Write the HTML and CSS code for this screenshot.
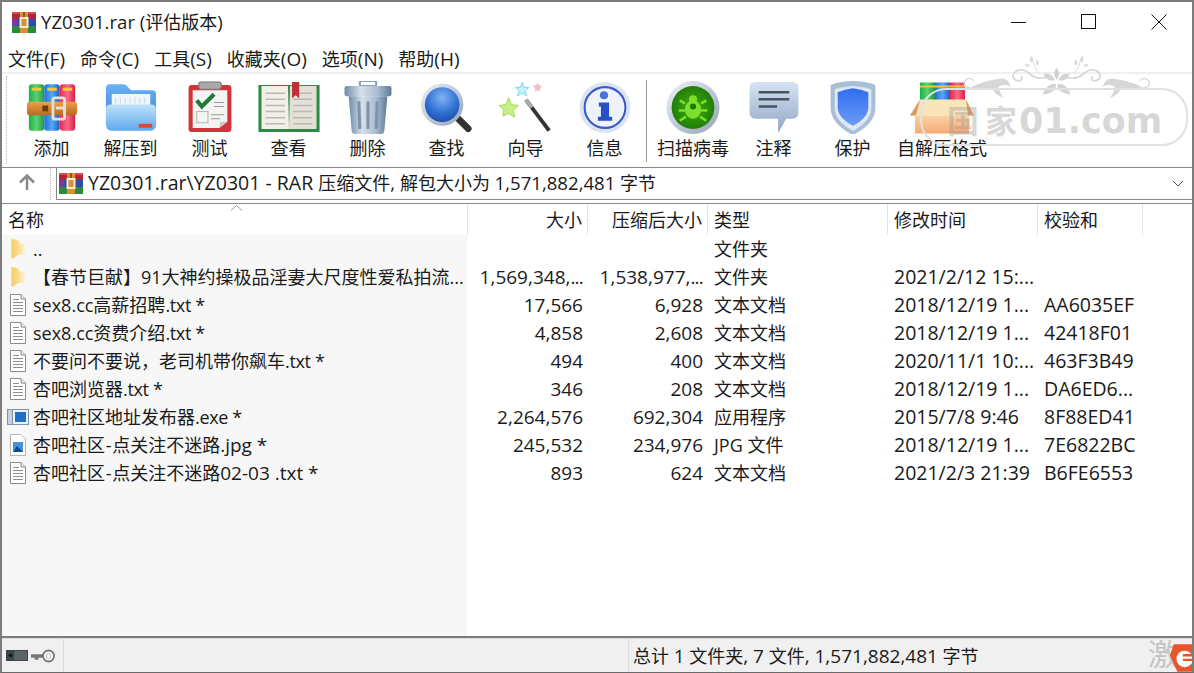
FILE: index.html
```html
<!DOCTYPE html>
<html lang="zh-CN">
<head>
<meta charset="utf-8">
<title>YZ0301.rar</title>
<link rel="stylesheet" href="styles.css">
</head>
<body>
<svg class="defs" width="0" height="0" aria-hidden="true">
  <defs>
    <linearGradient id="gGreen" x1="0" x2="1"><stop offset="0" stop-color="#1fae4e"/><stop offset=".5" stop-color="#58d36f"/><stop offset="1" stop-color="#1c9a45"/></linearGradient>
    <linearGradient id="gBlue" x1="0" x2="1"><stop offset="0" stop-color="#1f6fd8"/><stop offset=".5" stop-color="#58a8f5"/><stop offset="1" stop-color="#1a5fc4"/></linearGradient>
    <linearGradient id="gRed" x1="0" x2="1"><stop offset="0" stop-color="#e8264f"/><stop offset=".5" stop-color="#fb6a8a"/><stop offset="1" stop-color="#d91f48"/></linearGradient>
    <linearGradient id="gBelt" x1="0" x2="0" y1="0" y2="1"><stop offset="0" stop-color="#eaa24e"/><stop offset="1" stop-color="#b96a1e"/></linearGradient>
    <linearGradient id="gFolder" x1="0" x2="0" y1="0" y2="1"><stop offset="0" stop-color="#bfe2fb"/><stop offset="1" stop-color="#5fa8ec"/></linearGradient>
    <linearGradient id="gFolderBack" x1="0" x2="0" y1="0" y2="1"><stop offset="0" stop-color="#69b2f2"/><stop offset="1" stop-color="#3b7fd6"/></linearGradient>
    <linearGradient id="gCan" x1="0" x2="1"><stop offset="0" stop-color="#6f8ba8"/><stop offset=".35" stop-color="#d5e0ea"/><stop offset=".7" stop-color="#a9bdd0"/><stop offset="1" stop-color="#5f7b98"/></linearGradient>
    <radialGradient id="gLens" cx=".5" cy=".3" r=".75"><stop offset="0" stop-color="#7fb4f5"/><stop offset=".6" stop-color="#2f6fd2"/><stop offset="1" stop-color="#1c4aa6"/></radialGradient>
    <linearGradient id="gRing" x1="0" x2="1" y1="0" y2="1"><stop offset="0" stop-color="#eef2f7"/><stop offset="1" stop-color="#93a3b8"/></linearGradient>
    <radialGradient id="gBug" cx=".5" cy=".5" r=".55"><stop offset="0" stop-color="#3fae10"/><stop offset="1" stop-color="#1d7a06"/></radialGradient>
    <linearGradient id="gBubble" x1="0" x2="0" y1="0" y2="1"><stop offset="0" stop-color="#d6e3f2"/><stop offset="1" stop-color="#8fa6c4"/></linearGradient>
    <linearGradient id="gShield" x1="0" x2="0" y1="0" y2="1"><stop offset="0" stop-color="#2f6df0"/><stop offset="1" stop-color="#6d9cf7"/></linearGradient>
    <linearGradient id="gBox" x1="0" x2="0" y1="0" y2="1"><stop offset="0" stop-color="#fbd3a4"/><stop offset="1" stop-color="#f4a974"/></linearGradient>
    <linearGradient id="gSmallFolder" x1="0" x2="1"><stop offset="0" stop-color="#f5cb62"/><stop offset=".55" stop-color="#f9dd94"/><stop offset="1" stop-color="#fdf1cc"/></linearGradient>

    <symbol id="iRar" viewBox="0 0 24 21">
      <rect width="24" height="7" fill="#b0243c"/>
      <rect y="0" width="24" height="2" fill="#d84a5a"/>
      <rect y="7" width="24" height="7" fill="#2f4ab0"/>
      <rect y="14" width="24" height="7" fill="#2b8a3e"/>
      <rect x="0" y="7" width="5" height="7" fill="#7a3aa0"/>
      <rect x="8" y="0" width="8" height="21" fill="#d9912f"/>
      <rect x="8.500" y="6" width="7" height="9" fill="none" stroke="#f4ecd0" stroke-width="2"/>
      <rect x="11" y="0" width="2" height="5" fill="#8a5518"/>
    </symbol>
    <symbol id="iFolder" viewBox="0 0 16 20">
      <path d="M2 1 Q6 1 9 3 V5 H14 V15 H9 Q6 17 3 19 Q2 19 2 18 Z" fill="url(#gSmallFolder)"/>
    </symbol>
    <symbol id="iTxt" viewBox="0 0 18 22">
      <path d="M1.500 .5 H12 L16.500 5 V21.500 H1.500 Z" fill="#fff" stroke="#8a8a8a"/>
      <path d="M12 .5 V5 H16.500" fill="#e8e8e8" stroke="#8a8a8a"/>
      <path d="M4 5.500 H10 M4 8.500 H14 M4 11.500 H14 M4 14.500 H14 M4 17.500 H14" stroke="#8f8f8f" fill="none"/>
    </symbol>
    <g id="wmHalf">
      <path d="M60 108 Q100 85 150 80 Q175 78 182 105 Q165 92 145 105 Q150 125 160 138 Q135 128 128 110 Q95 112 60 108 Z" fill="#d6d6d6"/>
      <path d="M60 108 Q40 105 42 90 Q55 70 70 86" stroke="#d6d6d6" stroke-width="4" fill="none"/>
      <path d="M300 72 Q265 88 240 66 Q215 44 195 60 Q180 78 202 86 Q220 88 214 72" stroke="#d6d6d6" stroke-width="5" fill="none"/>
      <path d="M268 66 Q252 48 246 18" stroke="#dcdcdc" stroke-width="3" fill="none"/>
      <ellipse cx="244" cy="22" rx="4" ry="9" fill="#d8d8d8"/>
      <ellipse cx="262" cy="32" rx="4" ry="8" fill="#d8d8d8"/>
      <ellipse cx="232" cy="40" rx="7" ry="4" fill="#dedede"/>
      <path d="M280 65 Q305 60 315 85 Q290 90 280 65 Z" fill="#d4d4d4"/>
      <path d="M278 128 Q290 92 318 96 Q320 122 278 128 Z" fill="#d4d4d4"/>
    </g>
  </defs>
</svg>

<div class="window">
  <header class="titlebar">
    <svg class="title-icon"><use href="#iRar"/></svg>
    <span class="title-text"><span class="lt">YZ0301.rar (</span>评估版本<span class="lt">)</span></span>
    <div class="win-btns">
      <svg class="win-btn" viewBox="0 0 16 16"><path d="M0 8.500 H15" stroke="#111" fill="none"/></svg>
      <svg class="win-btn" viewBox="0 0 16 16"><rect x=".5" y=".5" width="14" height="14" fill="none" stroke="#111"/></svg>
      <svg class="win-btn" viewBox="0 0 16 16"><path d="M.5 .5 L15.500 15.500 M15.500 .5 L.5 15.500" stroke="#111" fill="none"/></svg>
    </div>
  </header>

  <nav class="menubar">
    <span>文件<span class="l">(F)</span></span><span>命令<span class="l">(C)</span></span><span>工具<span class="l">(S)</span></span><span>收藏夹<span class="l">(O)</span></span><span>选项<span class="l">(N)</span></span><span>帮助<span class="l">(H)</span></span>
  </nav>

  <div class="toolbar">
    <div class="grip grip-tool"></div>
    <div class="tool">
      <svg class="tool-icon" viewBox="-2 0 56 52">
        <rect x="2" y="2" width="16" height="48" rx="3" fill="url(#gGreen)"/>
        <rect x="18" y="2" width="16" height="48" rx="3" fill="url(#gBlue)"/>
        <rect x="34" y="2" width="16" height="48" rx="3" fill="url(#gRed)"/>
        <path d="M5 7 H15 M21 7 H31 M37 7 H47" stroke="#f0c93a" stroke-width="3"/>
        <rect x="0" y="20" width="52" height="14" rx="3" fill="url(#gBelt)"/>
        <rect x="27" y="16" width="12" height="22" rx="2" fill="none" stroke="#e4e0d6" stroke-width="3"/>
        <rect x="16" y="24" width="6" height="6" fill="#6b3e12"/>
        <rect x="30" y="25" width="8" height="3" fill="#e4e0d6"/>
      </svg>
      <span>添加</span>
    </div>
    <div class="tool">
      <svg class="tool-icon" viewBox="0 0 56 52">
        <path d="M2 6 Q2 2 6 2 H20 Q23 2 25 5 L28 8 H50 Q54 8 54 12 V44 H2 Z" fill="url(#gFolderBack)"/>
        <rect x="8" y="12" width="40" height="22" fill="#eef5fb"/>
        <path d="M12 16 V22 M17 16 V22 M22 16 V22 M27 16 V22 M32 16 V22 M37 16 V22 M42 16 V22" stroke="#c6d6e6"/>
        <path d="M2 28 Q2 23 7 23 H49 Q54 23 54 28 V44 Q54 50 48 50 H8 Q2 50 2 44 Z" fill="url(#gFolder)"/>
        <rect x="36" y="43" width="14" height="4" fill="#e2452c"/>
      </svg>
      <span>解压到</span>
    </div>
    <div class="tool">
      <svg class="tool-icon" viewBox="0 0 52 52">
        <rect x="5" y="4" width="42" height="46" rx="3" fill="#d2333a"/>
        <path d="M9 9 H43 V40 L35 46 H9 Z" fill="#f4f4f2"/>
        <path d="M35 46 L43 40 H36 Z" fill="#c9c9c9"/>
        <rect x="15" y="1" width="22" height="7" rx="2" fill="#a9a9a9" stroke="#777"/>
        <path d="M13 19 L18 25 L30 13" stroke="#1f7a3a" stroke-width="4" fill="none"/>
        <path d="M30 21 H40 M30 25 H40" stroke="#999"/>
        <rect x="13" y="30" width="11" height="11" fill="none" stroke="#b5b5b5"/>
        <path d="M27 33 H40 M27 37 H36" stroke="#999"/>
      </svg>
      <span>测试</span>
    </div>
    <div class="tool">
      <svg class="tool-icon tool-wide" viewBox="0 0 60 52">
        <path d="M0 4 H60 V50 H0 Z" fill="#2f8a46"/>
        <path d="M3 5 H29 L30 47 L3 47 Z" fill="#f1efe6"/>
        <path d="M31 5 H57 V47 H30 Z" fill="#e3e1d7"/>
        <path d="M7 12 H26 M7 18 H26 M7 24 H26 M7 30 H26 M7 36 H26 M7 42 H26 M34 12 H53 M34 18 H53 M34 24 H53 M34 30 H53 M34 36 H53 M34 42 H53" stroke="#b9b9b2" stroke-width="1.500"/>
        <path d="M33 1 H40 V17 L36.500 14 L33 17 Z" fill="#c0303a"/>
      </svg>
      <span>查看</span>
    </div>
    <div class="tool">
      <svg class="tool-icon" viewBox="0 0 52 52">
        <rect x="18" y="0" width="16" height="5" rx="1" fill="none" stroke="#8aa0b6" stroke-width="2"/>
        <rect x="3" y="5" width="46" height="10" rx="2" fill="url(#gCan)"/>
        <path d="M7 15 H45 L42 49 Q42 52 38 52 H14 Q10 52 10 49 Z" fill="url(#gCan)"/>
        <path d="M17 20 L18 47 M26 20 V47 M35 20 L34 47" stroke="#7d94ab" stroke-width="3"/>
      </svg>
      <span>删除</span>
    </div>
    <div class="tool">
      <svg class="tool-icon" viewBox="0 0 56 52">
        <path d="M38 36 L50 48" stroke="#333" stroke-width="7" stroke-linecap="round"/>
        <circle cx="23" cy="23" r="22" fill="url(#gRing)"/>
        <circle cx="23" cy="23" r="18" fill="url(#gLens)"/>
      </svg>
      <span>查找</span>
    </div>
    <div class="tool">
      <svg class="tool-icon" viewBox="0 0 56 52">
        <path d="M28 18 L52 50" stroke="#333" stroke-width="4"/>
        <path d="M28 18 L34 26" stroke="#aaa" stroke-width="4"/>
        <path d="M10 16 L13 23 L20 24 L15 29 L16 36 L10 32 L4 35 L5 28 L0 24 L7 23 Z" fill="#c8f08a" stroke="#9fdc4e"/>
        <path d="M24 0 L26 5 L31 5 L27 9 L29 14 L24 11 L19 14 L21 9 L17 5 L22 5 Z" fill="#c6f1f7" stroke="#6fdcee"/>
        <path d="M40 0 L41.500 3 L45 3.500 L42.500 6 L43 9.500 L40 8 L37 9.500 L37.500 6 L35 3.500 L38.500 3 Z" fill="#f9bcc6"/>
      </svg>
      <span>向导</span>
    </div>
    <div class="tool">
      <svg class="tool-icon" viewBox="0 0 52 52">
        <circle cx="26" cy="26" r="25" fill="#dbe4f0"/>
        <circle cx="26" cy="26" r="20" fill="#eef2fa" stroke="#3a58c8" stroke-width="2"/>
        <circle cx="25" cy="14" r="4" fill="#4a70dc"/>
        <path d="M20 21 H30 V35 H33 V39 H19 V35 H22 V25 H20 Z" fill="#2a50c8"/>
      </svg>
      <span>信息</span>
    </div>
    <div class="tool-sep"></div>
    <div class="tool tool-scan">
      <svg class="tool-icon" viewBox="0 0 52 52">
        <circle cx="26" cy="26" r="26" fill="url(#gRing)"/>
        <circle cx="26" cy="26" r="21" fill="url(#gBug)"/>
        <ellipse cx="26" cy="28" rx="8" ry="9" fill="#7ee02a"/>
        <circle cx="26" cy="18" r="4" fill="#7ee02a"/>
        <path d="M18 22 L13 19 M18 29 H12 M19 35 L13 39 M34 22 L39 19 M34 29 H40 M33 35 L39 39" stroke="#7ee02a" stroke-width="2.500"/>
        <circle cx="26" cy="25" r="3" fill="#1d7a06"/>
      </svg>
      <span>扫描病毒</span>
    </div>
    <div class="tool">
      <svg class="tool-icon" viewBox="0 0 52 52">
        <path d="M8 1 H44 Q50 1 50 7 V31 Q50 37 44 37 H38 L30 51 V37 H8 Q2 37 2 31 V7 Q2 1 8 1 Z" fill="url(#gBubble)"/>
        <path d="M11 11 H41 M11 18 H41 M11 25 H29" stroke="#47535f" stroke-width="2.500"/>
      </svg>
      <span>注释</span>
    </div>
    <div class="tool">
      <svg class="tool-icon" viewBox="0 0 52 52">
        <path d="M26 0 Q38 0 48 4 V26 Q48 42 26 53 Q4 42 4 26 V4 Q14 0 26 0 Z" fill="#a9bfd8"/>
        <path d="M26 5 Q36 6 44 8 V26 Q44 39 26 49 Q8 39 8 26 V8 Q16 6 26 5 Z" fill="#dfe8f5"/>
        <path d="M26 7 Q34 8 41 11 V26 Q41 36 26 44 Q11 36 11 26 V11 Q18 8 26 7 Z" fill="url(#gShield)"/>
      </svg>
      <span>保护</span>
    </div>
    <div class="tool tool-sfx">
      <svg class="tool-icon" viewBox="0 0 64 52">
        <rect x="10" y="1" width="15" height="26" fill="url(#gGreen)"/>
        <rect x="25" y="1" width="15" height="26" fill="url(#gBlue)"/>
        <rect x="40" y="1" width="15" height="26" fill="url(#gRed)"/>
        <path d="M10 5 H55" stroke="#ecc73a" stroke-width="2"/>
        <path d="M10 18 H56 L64 34 H0 Z" fill="#f9e6b8"/>
        <path d="M10 18 L0 34 H6 Z M56 18 L64 34 H58 Z" fill="#d99a6a"/>
        <rect x="5" y="34" width="54" height="18" fill="url(#gBox)"/>
      </svg>
      <span>自解压格式</span>
    </div>
  </div>

  <div class="addressbar">
    <svg class="up-arrow" viewBox="0 0 18 18"><path d="M9 17 V3 M2 9.500 L9 2.500 L16 9.500" stroke="#8a8a8a" stroke-width="2.500" fill="none"/></svg>
    <div class="grip grip-addr"></div>
    <div class="address">
      <svg class="address-icon"><use href="#iRar"/></svg>
      <span class="address-text"><span class="l2">YZ0301.rar\YZ0301 - RAR </span>压缩文件<span class="lt">, </span>解包大小为 <span class="lt">1,571,882,481</span> 字节</span>
      <svg class="chevron" viewBox="0 0 12 8"><path d="M1 1 L6 6 L11 1" stroke="#555" fill="none"/></svg>
    </div>
  </div>

  <section class="filelist">
    <div class="row head">
      <div class="cell">名称<svg class="sort" viewBox="0 0 12 6"><path d="M.5 5.500 L6 .5 L11.500 5.500" stroke="#999" fill="none"/></svg></div>
      <div class="cell num">大小</div>
      <div class="cell num">压缩后大小</div>
      <div class="cell">类型</div>
      <div class="cell">修改时间</div>
      <div class="cell">校验和</div>
    </div>
    <div class="rows">
      <div class="row"><div class="cell name"><svg class="ico"><use href="#iFolder"/></svg><span class="name-text">..</span></div><div class="cell num"></div><div class="cell num"></div><div class="cell">文件夹</div><div class="cell"></div><div class="cell"></div></div>
      <div class="row"><div class="cell name"><svg class="ico"><use href="#iFolder"/></svg><span class="name-text">【春节巨献】91大神约操极品淫妻大尺度性爱私拍流...</span></div><div class="cell num n">1,569,348,<span class="e">...</span></div><div class="cell num n">1,538,977,<span class="e">...</span></div><div class="cell">文件夹</div><div class="cell d">2021/2/12 15:...</div><div class="cell"></div></div>
      <div class="row"><div class="cell name"><svg class="ico"><use href="#iTxt"/></svg><span class="name-text">sex8.cc高薪招聘<span class="x">.txt *</span></span></div><div class="cell num n">17,566</div><div class="cell num n">6,928</div><div class="cell">文本文档</div><div class="cell d">2018/12/19 1...</div><div class="cell c">AA6035EF</div></div>
      <div class="row"><div class="cell name"><svg class="ico"><use href="#iTxt"/></svg><span class="name-text">sex8.cc资费介绍<span class="x">.txt *</span></span></div><div class="cell num n">4,858</div><div class="cell num n">2,608</div><div class="cell">文本文档</div><div class="cell d">2018/12/19 1...</div><div class="cell c">42418F01</div></div>
      <div class="row"><div class="cell name"><svg class="ico"><use href="#iTxt"/></svg><span class="name-text">不要问不要说，老司机带你飙车<span class="x">.txt *</span></span></div><div class="cell num n">494</div><div class="cell num n">400</div><div class="cell">文本文档</div><div class="cell d">2020/11/1 10:...</div><div class="cell c">463F3B49</div></div>
      <div class="row"><div class="cell name"><svg class="ico"><use href="#iTxt"/></svg><span class="name-text">杏吧浏览器<span class="x">.txt *</span></span></div><div class="cell num n">346</div><div class="cell num n">208</div><div class="cell">文本文档</div><div class="cell d">2018/12/19 1...</div><div class="cell c">DA6ED6...</div></div>
      <div class="row"><div class="cell name"><svg class="ico ico-exe" viewBox="0 0 22 18"><rect x=".5" y="1.500" width="21" height="15" fill="#eef3f8" stroke="#7f93a8"/><rect x=".5" y="1.500" width="5" height="15" fill="#c3d3e3" stroke="#7f93a8"/><rect x="8" y="4" width="11" height="10" fill="#1e70c8"/></svg><span class="name-text name-exe">杏吧社区地址发布器<span class="x">.exe *</span></span></div><div class="cell num n">2,264,576</div><div class="cell num n">692,304</div><div class="cell">应用程序</div><div class="cell d">2015/7/8 9:46</div><div class="cell c">8F88ED41</div></div>
      <div class="row"><div class="cell name"><svg class="ico" viewBox="0 0 18 22"><path d="M1.500 .5 H12 L16.500 5 V21.500 H1.500 Z" fill="#fff" stroke="#b5b5b5"/><rect x="4" y="8" width="10" height="10" fill="#4a90d8"/><path d="M4 18 L8 12 L14 18 Z" fill="#124a90"/></svg><span class="name-text">杏吧社区<span class="h">-</span>点关注不迷路<span class="l">.jpg *</span></span></div><div class="cell num n">245,532</div><div class="cell num n">234,976</div><div class="cell">JPG 文件</div><div class="cell d">2018/12/19 1...</div><div class="cell c">7E6822BC</div></div>
      <div class="row"><div class="cell name"><svg class="ico"><use href="#iTxt"/></svg><span class="name-text">杏吧社区<span class="h">-</span>点关注不迷路<span class="l">02-03 .txt *</span></span></div><div class="cell num n">893</div><div class="cell num n">624</div><div class="cell">文本文档</div><div class="cell d">2021/2/3 21:39</div><div class="cell c">B6FE6553</div></div>
    </div>
  </section>

  <footer class="statusbar">
    <div class="status-icons">
      <svg class="drive" viewBox="0 0 24 12"><rect width="24" height="12" fill="#3c4548"/><rect x="9" y="1" width="14" height="10" fill="#5b6467"/><circle cx="5" cy="6" r="2" fill="#121a1a"/></svg>
      <svg class="key" viewBox="0 0 26 16"><path d="M0 6 H14 V10 H8 V12 H4 V10 H0 Z" fill="#777"/><circle cx="19" cy="8" r="6" fill="#fff" stroke="#777" stroke-width="2"/><circle cx="19" cy="8" r="2.500" fill="none" stroke="#aaa"/></svg>
    </div>
    <div class="status-gap"></div>
    <div class="status-text">总计 <span class="l">1</span> 文件夹<span class="l">, 7</span> 文件<span class="l">, 1,571,882,481</span> 字节</div>
  </footer>

  <div class="watermark" aria-hidden="true">
    <svg class="ornament" viewBox="0 0 600 180">
      <use href="#wmHalf"/>
      <use href="#wmHalf" transform="translate(640 0) scale(-1 1)"/>
      <path d="M320 48 Q336 62 320 84 Q304 62 320 48 Z" fill="#d0d0d0"/>
    </svg>
    <div class="wm-pill"><span class="wm-cn">国</span><span class="wm-cn wm-cn2">家</span><span class="wm-en">01.com</span></div>
  </div>

  <div class="corner-mark" aria-hidden="true">
    <span class="corner-text">激</span>
    <svg class="corner-logo" viewBox="0 0 24 30"><path d="M4 0 L24 0 V30 H8 L0 12 Z" fill="#e8552b"/><circle cx="16" cy="16" r="9" fill="#fff"/><path d="M14 12 H24 M14 17 H24" stroke="#e8552b" stroke-width="2.500"/></svg>
  </div>
</div>
</body>
</html>
```

FILE: styles.css
```css
* { box-sizing: border-box; }
html, body { margin: 0; height: 100%; }
body {
  width: 1194px;
  height: 673px;
  overflow: hidden;
  font-family: "Open Sans", "Noto Sans CJK SC", sans-serif;
  font-size: 18px;
  color: #1a1a1a;
  background: #fff;
}
.defs { position: absolute; }
.l { font-size: 19px; }
.lt { font-size: 18.6px; }
.l2 { font-size: 19.5px; }
.h { margin: 0 .7px; }
.e { letter-spacing: -.8px; }
.x { letter-spacing: -.35px; }
.window {
  position: relative;
  width: 1194px;
  height: 673px;
  display: flex;
  flex-direction: column;
  border: 2px solid #7c7c7c;
  border-bottom: 1px solid #6a6a6a;
  background: #fff;
  overflow: hidden;
}
.titlebar {
  height: 44px;
  flex: none;
  display: flex;
  align-items: center;
  padding: 0 0 4px 10px;
}
.title-icon { width: 24px; height: 21px; flex: none; }
.title-text { margin-left: 5px; line-height: 24px; }
.win-btns {
  margin-left: auto;
  display: flex;
  gap: 54px;
  padding-right: 25px;
}
.win-btn { width: 16px; height: 16px; flex: none; }
.menubar {
  height: 28px;
  flex: none;
  display: flex;
  gap: 15px;
  padding-left: 6px;
  align-items: center;
  border-bottom: 2px solid #f0f0f0;
}
.menubar > span { line-height: 24px; white-space: nowrap; }
.toolbar {
  height: 94px;
  flex: none;
  display: flex;
  padding-left: 4px;
  padding-top: 7px;
  border-bottom: 1px solid #8a8a8a;
}
.grip { width: 1px; flex: none; border-left: 1px dotted #b8b8b8; }
.grip-tool { height: 88px; margin: -5px 5px 0 0; }
.grip-addr { height: 32px; margin-left: 14px; }
.tool {
  width: 79px;
  flex: none;
  display: flex;
  flex-direction: column;
  align-items: center;
  gap: 1px;
}
.tool span { line-height: 26px; white-space: nowrap; }
.tool-icon { width: 54px; height: 53px; flex: none; }
.tool-wide { width: 62px; }
.tool-sep {
  width: 1px;
  height: 82px;
  margin: -1px 5px 0 2px;
  background: #9a9a9a;
  flex: none;
}
.tool-scan { width: 82px; }
.tool-sfx { width: 100px; }
.tool-sfx .tool-icon { width: 64px; }
.addressbar {
  height: 36px;
  flex: none;
  display: flex;
  align-items: flex-start;
  border-bottom: 1px solid #8a8a8a;
}
.up-arrow { width: 18px; height: 18px; margin: 5px 0 0 16px; flex: none; }
.address {
  margin-left: 5px;
  flex: 1;
  height: 32px;
  display: flex;
  align-items: center;
  border-left: 1px solid #8a8a8a;
  border-bottom: 1px solid #8a8a8a;
  padding-left: 2px;
  padding-right: 8px;
}
.address-icon { width: 24px; height: 21px; flex: none; }
.address-text { margin: -2px 0 0 5px; white-space: nowrap; line-height: 30px; }
.chevron { width: 12px; height: 8px; margin-left: auto; flex: none; }
.filelist {
  flex: 1;
  min-height: 0;
  display: flex;
  flex-direction: column;
  border-bottom: 2px solid #7c7c7c;
}
.row {
  display: grid;
  grid-template-columns: 466px 120px 120px 180px 150px 105px;
  height: 28px;
  line-height: 28px;
  flex: none;
}
.head {
  height: 31px;
  line-height: 31px;
  position: relative;
}
.head .cell { border-right: 1px solid #e4e4e4; position: relative; padding-top: 1px; }
.rows {
  flex: 1;
  min-height: 0;
  background: linear-gradient(to right, #f7f7f7 465px, #fff 465px);
}
.cell {
  padding: 0 5px 0 6px;
  white-space: nowrap;
  overflow: hidden;
}
.num { text-align: right; }
.n { font-size: 19px; }
.d { font-size: 19.5px; }
.c { font-size: 19.5px; }
.name { display: flex; align-items: center; padding-left: 7px; }
.ico { width: 18px; height: 22px; flex: none; }
.ico-exe { width: 22px; margin-left: -2px; }
.name-text { margin-left: 6px; line-height: 28px; }
.name-exe { margin-left: 4px; }
.sort {
  position: absolute;
  left: 228px;
  top: 1px;
  width: 13px;
  height: 6px;
}
.statusbar {
  height: 34px;
  flex: none;
  display: flex;
  align-items: center;
  background: #f0f0f0;
  line-height: 34px;
  border-top: 1px solid #dcdcdc;
}
.status-icons {
  width: 62px;
  height: 100%;
  display: flex;
  align-items: center;
  padding-left: 4px;
  gap: 3px;
  border-right: 1px solid #dcdcdc;
  flex: none;
}
.drive { width: 22px; height: 11px; flex: none; }
.key { width: 24px; height: 16px; flex: none; }
.status-gap {
  width: 565px;
  height: 100%;
  border-right: 1px solid #dcdcdc;
  flex: none;
}
.status-text { padding-left: 4px; white-space: nowrap; }
.watermark {
  position: absolute;
  left: 918px;
  top: 53px;
  width: 270px;
  height: 94px;
  pointer-events: none;
}
.ornament {
  position: absolute;
  left: 30px;
  top: -3px;
  width: 200px;
  height: 60px;
}
.wm-pill {
  position: absolute;
  left: 0;
  top: 33px;
  width: 268px;
  height: 58px;
  border: 2px solid #e0e0e0;
  border-radius: 26px;
  display: flex;
  align-items: center;
  padding: 8px 0 0 25px;
  color: rgba(150, 150, 150, .4);
}
.wm-cn { font-size: 32px; font-weight: 700; line-height: 40px; margin-right: 6px; }
.wm-cn2 { margin-right: 2px; }
.wm-en { font-family: "DejaVu Sans", sans-serif; font-size: 35px; font-weight: 700; line-height: 40px; }
.corner-mark {
  position: absolute;
  right: 0;
  bottom: 0;
  width: 44px;
  height: 34px;
  overflow: hidden;
  pointer-events: none;
}
.corner-text {
  position: absolute;
  left: 0;
  top: -2px;
  font-size: 30px;
  line-height: 36px;
  color: #c4c4c4;
}
.corner-logo {
  position: absolute;
  right: 0;
  top: 6px;
  width: 22px;
  height: 28px;
}
```
